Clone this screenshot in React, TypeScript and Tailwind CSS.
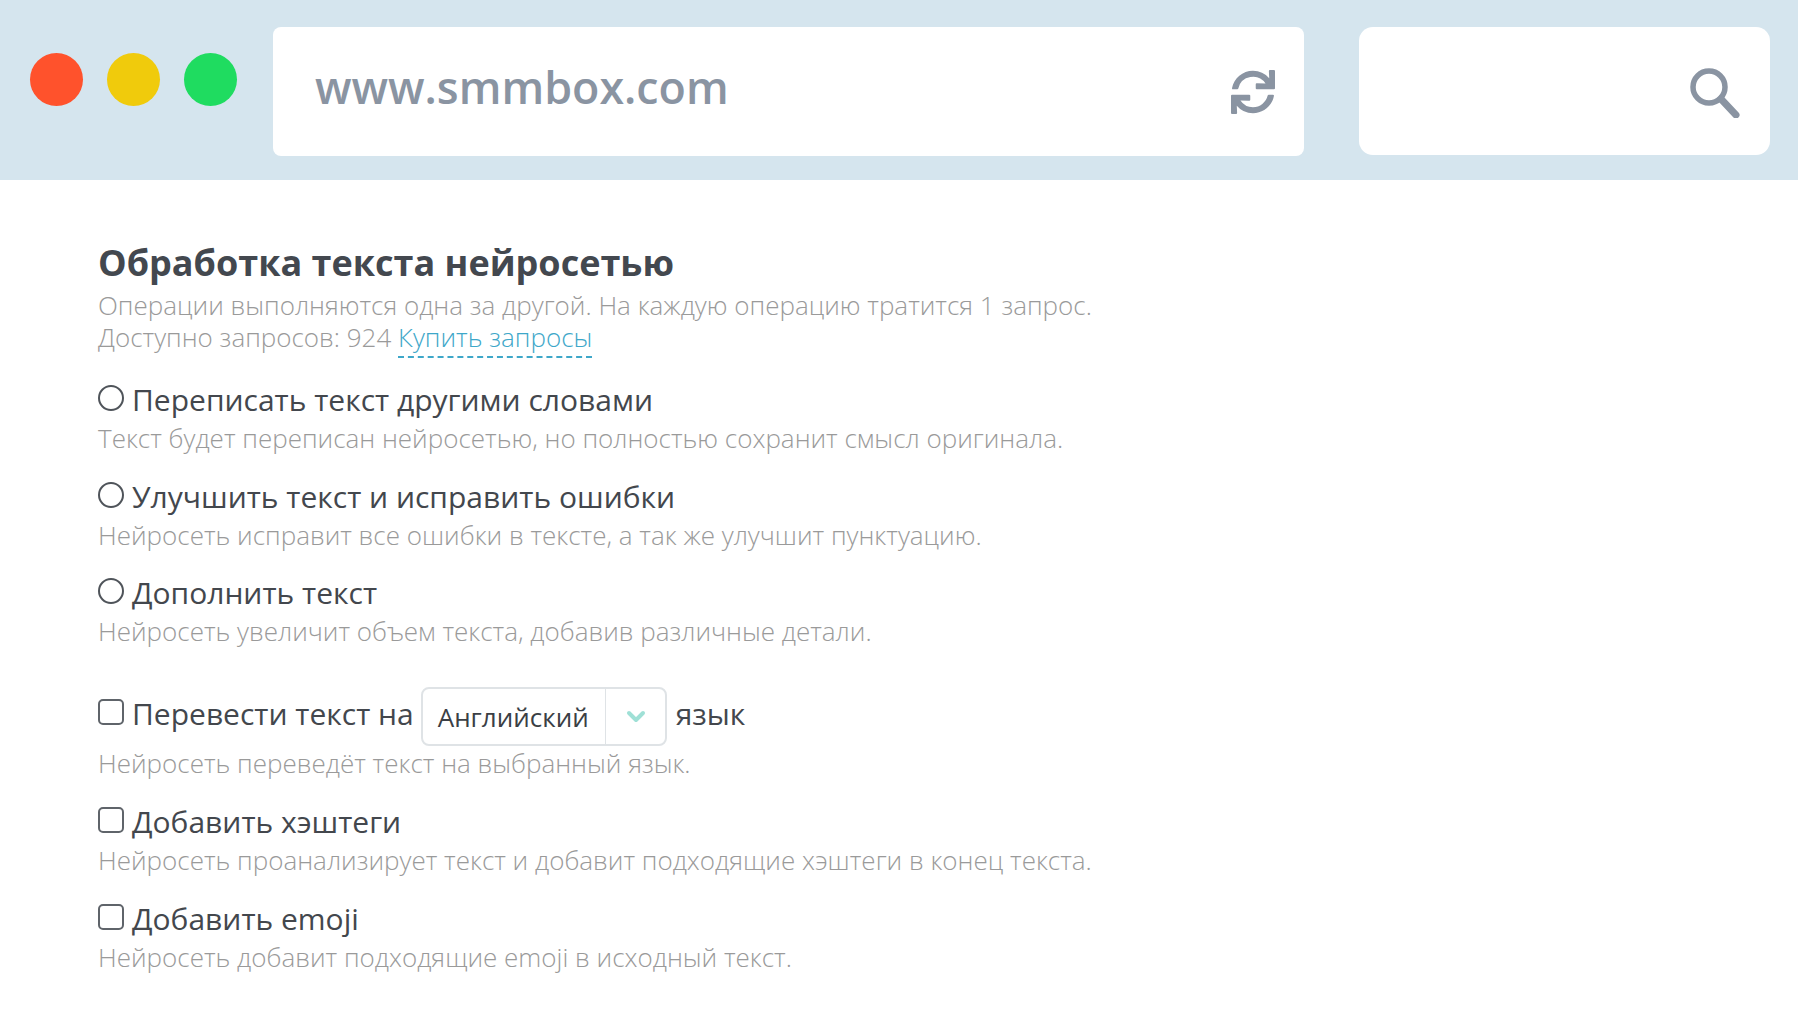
import React from 'react';
import { FaSync } from 'react-icons/fa';

const RADIO_OPTIONS = [
  { label: 'Переписать текст другими словами', hint: 'Текст будет переписан нейросетью, но полностью сохранит смысл оригинала.' },
  { label: 'Улучшить текст и исправить ошибки', hint: 'Нейросеть исправит все ошибки в тексте, а так же улучшит пунктуацию.' },
  { label: 'Дополнить текст', hint: 'Нейросеть увеличит объем текста, добавив различные детали.' },
];

const CHECK_OPTIONS = [
  { label: 'Добавить хэштеги', hint: 'Нейросеть проанализирует текст и добавит подходящие хэштеги в конец текста.' },
  { label: 'Добавить emoji', hint: 'Нейросеть добавит подходящие emoji в исходный текст.' },
];

const Hint = ({ children }: { children: React.ReactNode }) => (
  <p className="text-[26px] leading-[36px] font-light text-[#9a9a9a]">{children}</p>
);

const Radio = () => <span className="w-[26px] h-[26px] mb-[4px] rounded-full border-2 border-[#4f545a] shrink-0 bg-white" />;
const Checkbox = () => <span className="w-[26px] h-[26px] mb-[4px] rounded-[5px] border-2 border-[#5f646a] shrink-0 bg-white" />;

const BrowserBar = () => (
  <header className="h-[180px] bg-[#d5e5ee] flex items-start pt-[27px] pl-[30px] pr-[28px]">
    <div className="flex gap-[24px] pt-[26px] mr-[36px]">
      <span className="w-[53px] h-[53px] rounded-full bg-[#ff522c]" />
      <span className="w-[53px] h-[53px] rounded-full bg-[#f0cb0c]" />
      <span className="w-[53px] h-[53px] rounded-full bg-[#1fdc60]" />
    </div>
    <div className="w-[1031px] h-[129px] bg-white rounded-[8px] flex items-center justify-between pl-[42px] pr-[29px] mr-[55px]">
      <span className="text-[44.8px] font-semibold text-[#8a94a2] pb-[10px]">www.smmbox.com</span>
      <FaSync className="w-[44px] h-[44px] text-[#8a94a2]" />
    </div>
    <div className="flex-1 h-[128px] bg-white rounded-[14px] flex items-center justify-end pr-[30px]">
      <svg className="mt-[3px]" width="50" height="50" viewBox="0 0 50 50" fill="none" stroke="#8a94a2" strokeLinecap="round">
        <circle cx="19" cy="19" r="16" strokeWidth="5.5" />
        <path d="M31 31 L46 47" strokeWidth="7" />
      </svg>
    </div>
  </header>
);

export default function App() {
  return (
    <div className="w-[1798px] h-[1034px] bg-white overflow-hidden font-['Open_Sans',sans-serif]">
      <BrowserBar />
      <main className="pl-[98px] pt-[58px]">
        <h1 className="text-[36px] leading-[50px] font-bold text-[#43484f]">Обработка текста нейросетью</h1>
        <p className="text-[26px] leading-[32px] font-light text-[#9a9a9a] mt-[1px]">
          Операции выполняются одна за другой. На каждую операцию тратится 1 запрос.
          <br />
          Доступно запросов: 924{' '}
          <a className="text-[#3ea7c9] border-b-2 border-dashed border-[#3ea7c9] pb-[1px]">Купить запросы</a>
        </p>
        <div className="mt-[27px] flex flex-col gap-[20.5px]">
          {RADIO_OPTIONS.map((opt, i) => (
            <div key={i}>
              <label className="flex items-center gap-[8px] text-[30px] leading-[40px] text-[#43474d]">
                <Radio />
                {opt.label}
              </label>
              <Hint>{opt.hint}</Hint>
            </div>
          ))}
        </div>
        <div className="mt-[35px]">
          <div className="flex items-center gap-[8px] h-[59px] text-[30px] leading-[59px] text-[#43474d]">
            <Checkbox />
            <span>Перевести текст на</span>
            <div className="w-[246px] h-[59px] mt-[6px] -ml-[1px] mr-[1px] border-2 border-[#dfe3e6] rounded-[8px] flex items-center">
              <span className="flex-1 pl-[15px] text-[26px] leading-none text-[#3b3f45]">Английский</span>
              <span className="w-[60px] h-full pl-[2px] border-l border-[#dfe3e6] flex items-center justify-center">
                <svg width="20" height="14" viewBox="0 0 20 14" fill="none" stroke="#9fe0d6" strokeWidth="4" strokeLinecap="round" strokeLinejoin="round">
                  <path d="M3 3 L10 10 L17 3" />
                </svg>
              </span>
            </div>
            <span>язык</span>
          </div>
          <div className="mt-[2px]">
            <Hint>Нейросеть переведёт текст на выбранный язык.</Hint>
          </div>
        </div>
        <div className="mt-[21px] flex flex-col gap-[20.5px]">
          {CHECK_OPTIONS.map((opt, i) => (
            <div key={i}>
              <label className="flex items-center gap-[8px] text-[30px] leading-[40px] text-[#43474d]">
                <Checkbox />
                {opt.label}
              </label>
              <Hint>{opt.hint}</Hint>
            </div>
          ))}
        </div>
      </main>
    </div>
  );
}
